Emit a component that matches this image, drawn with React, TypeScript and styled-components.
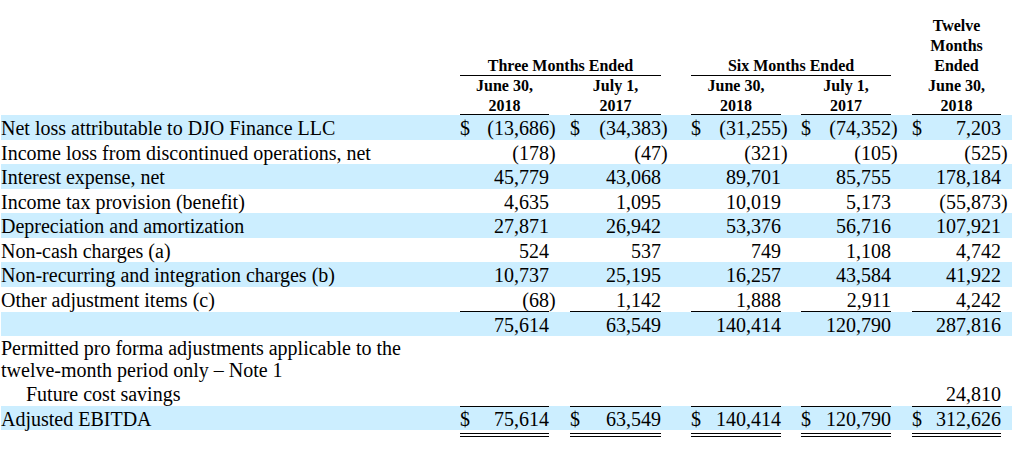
import React from 'react';
import styled, { createGlobalStyle } from 'styled-components';

const GlobalStyle = createGlobalStyle`
  html, body {
    margin: 0;
    padding: 0;
    background: #fff;
  }
  body {
    font-family: 'Liberation Serif', 'Times New Roman', serif;
    color: #000;
  }
`;

const SHADE = '#cceeff';

const Page = styled.div`
  width: 1014px;
  height: 449px;
  padding: 16px 0 0 1px;
  box-sizing: border-box;
  overflow: hidden;
`;

const Table = styled.table`
  width: 1011px;
  table-layout: fixed;
  border-collapse: separate;
  border-spacing: 0;
  font-size: 20px;
`;

const Col = styled.col<{ $w: number }>`
  width: ${p => p.$w}px;
`;

const HeadCell = styled.th<{ $rule?: boolean }>`
  padding: 0;
  font-size: 16px;
  font-weight: bold;
  text-align: center;
  vertical-align: bottom;
  white-space: nowrap;
  border-bottom: 1px solid ${p => (p.$rule ? '#000' : 'transparent')};
`;

const HeadText = styled.div`
  line-height: 20px;
  margin-bottom: -1.5px;
`;

const Row = styled.tr<{ $shade?: boolean; $top: number; $lh: number; $band?: number }>`
  & > td {
    padding-top: ${p => p.$top}px;
    line-height: ${p => p.$lh}px;
    vertical-align: baseline;
    background: ${p =>
      !p.$shade
        ? 'none'
        : p.$band
        ? `linear-gradient(${SHADE}, ${SHADE}) 0 0 / 100% ${p.$band}px no-repeat border-box`
        : SHADE};
  }
`;

const Label = styled.td<{ $indent?: boolean }>`
  padding: 0 0 0 ${p => (p.$indent ? 25 : 0)}px;
  white-space: nowrap;
  text-align: left;
`;

const Amount = styled.td<{ $over?: boolean; $under?: 'single' | 'double' }>`
  padding: 0 0 ${p => (p.$under === 'double' ? 2 : 0)}px;
  text-align: right;
  white-space: nowrap;
  border-top: ${p => (p.$over ? '1px solid #000' : 'none')};
  border-bottom: ${p =>
    p.$under === 'double' ? '4px double #000' : p.$under === 'single' ? '1px solid #000' : 'none'};
`;

const Dollar = styled.span`
  float: left;
`;

const Paren = styled.td`
  padding: 0;
  text-align: left;
  white-space: nowrap;
`;

const Gap = styled.td`
  padding: 0;
`;

const widths = [459, 89, 7, 14, 91, 7, 23, 90, 7, 13, 90, 7, 14, 89, 7, 4];

type Line = {
  label: React.ReactNode;
  values: string[];
  shade?: boolean;
  dollar?: boolean;
  indent?: boolean;
  over?: boolean;
  under?: 'single' | 'double';
  top: number;
  lh: number;
  band?: number;
};

const empty = ['', '', '', '', ''];

const lines: Line[] = [
  {
    label: 'Net loss attributable to DJO Finance LLC',
    values: ['(13,686)', '(34,383)', '(31,255)', '(74,352)', '7,203'],
    shade: true,
    dollar: true,
    top: 3,
    lh: 21.5,
  },
  {
    label: 'Income loss from discontinued operations, net',
    values: ['(178)', '(47)', '(321)', '(105)', '(525)'],
    top: 3,
    lh: 21.5,
  },
  {
    label: 'Interest expense, net',
    values: ['45,779', '43,068', '89,701', '85,755', '178,184'],
    shade: true,
    top: 3,
    lh: 21.5,
  },
  {
    label: 'Income tax provision (benefit)',
    values: ['4,635', '1,095', '10,019', '5,173', '(55,873)'],
    top: 3,
    lh: 21.5,
  },
  {
    label: 'Depreciation and amortization',
    values: ['27,871', '26,942', '53,376', '56,716', '107,921'],
    shade: true,
    top: 3,
    lh: 21.5,
  },
  {
    label: 'Non-cash charges (a)',
    values: ['524', '537', '749', '1,108', '4,742'],
    top: 3,
    lh: 21.5,
  },
  {
    label: 'Non-recurring and integration charges (b)',
    values: ['10,737', '25,195', '16,257', '43,584', '41,922'],
    shade: true,
    top: 3,
    lh: 21.5,
  },
  {
    label: 'Other adjustment items (c)',
    values: ['(68)', '1,142', '1,888', '2,911', '4,242'],
    under: 'single',
    top: 3,
    lh: 21.5,
  },
  {
    label: '',
    values: ['75,614', '63,549', '140,414', '120,790', '287,816'],
    shade: true,
    top: 3,
    lh: 20.5,
  },
  {
    label: (
      <>
        Permitted pro forma adjustments applicable to the
        <br />
        twelve-month period only – Note 1
      </>
    ),
    values: empty,
    top: 1.5,
    lh: 22.25,
  },
  {
    label: 'Future cost savings',
    values: ['', '', '', '', '24,810'],
    indent: true,
    top: 0,
    lh: 24.5,
  },
  {
    label: 'Adjusted EBITDA',
    values: ['75,614', '63,549', '140,414', '120,790', '312,626'],
    shade: true,
    dollar: true,
    over: true,
    under: 'double',
    top: 2,
    lh: 21.5,
    band: 24,
  },
];

function amountCells(line: Line) {
  const cells: React.ReactNode[] = [];
  line.values.forEach((v, i) => {
    if (i > 0) cells.push(<Gap key={`g${i}`} />);
    const neg = v.endsWith(')');
    cells.push(
      <Amount key={`a${i}`} $over={line.over} $under={line.under}>
        {line.dollar && <Dollar>$</Dollar>}
        {neg ? v.slice(0, -1) : v}
      </Amount>
    );
    cells.push(<Paren key={`p${i}`}>{neg ? ')' : ''}</Paren>);
  });
  cells.push(<Gap key="end" />);
  return cells;
}

const dateHead = (month: string, year: string) => (
  <HeadText>
    {month}
    <br />
    {year}
  </HeadText>
);

function App() {
  return (
    <Page>
      <GlobalStyle />
      <Table>
        <colgroup>
          {widths.map((w, i) => (
            <Col key={i} $w={w} />
          ))}
        </colgroup>
        <thead>
          <tr>
            <HeadCell />
            <HeadCell colSpan={4} $rule>
              <HeadText>Three Months Ended</HeadText>
            </HeadCell>
            <HeadCell colSpan={2} />
            <HeadCell colSpan={4} $rule>
              <HeadText>Six Months Ended</HeadText>
            </HeadCell>
            <HeadCell colSpan={2} />
            <HeadCell>
              <HeadText>
                Twelve
                <br />
                Months
                <br />
                Ended
              </HeadText>
            </HeadCell>
            <HeadCell colSpan={2} />
          </tr>
          <tr>
            <HeadCell />
            <HeadCell $rule>{dateHead('June 30,', '2018')}</HeadCell>
            <HeadCell colSpan={2} />
            <HeadCell $rule>{dateHead('July 1,', '2017')}</HeadCell>
            <HeadCell colSpan={2} />
            <HeadCell $rule>{dateHead('June 30,', '2018')}</HeadCell>
            <HeadCell colSpan={2} />
            <HeadCell $rule>{dateHead('July 1,', '2017')}</HeadCell>
            <HeadCell colSpan={2} />
            <HeadCell $rule>{dateHead('June 30,', '2018')}</HeadCell>
            <HeadCell colSpan={2} />
          </tr>
        </thead>
        <tbody>
          {lines.map((line, i) => (
            <Row key={i} $shade={line.shade} $top={line.top} $lh={line.lh} $band={line.band}>
              <Label $indent={line.indent}>{line.label}</Label>
              {amountCells(line)}
            </Row>
          ))}
        </tbody>
      </Table>
    </Page>
  );
}

export default App;
